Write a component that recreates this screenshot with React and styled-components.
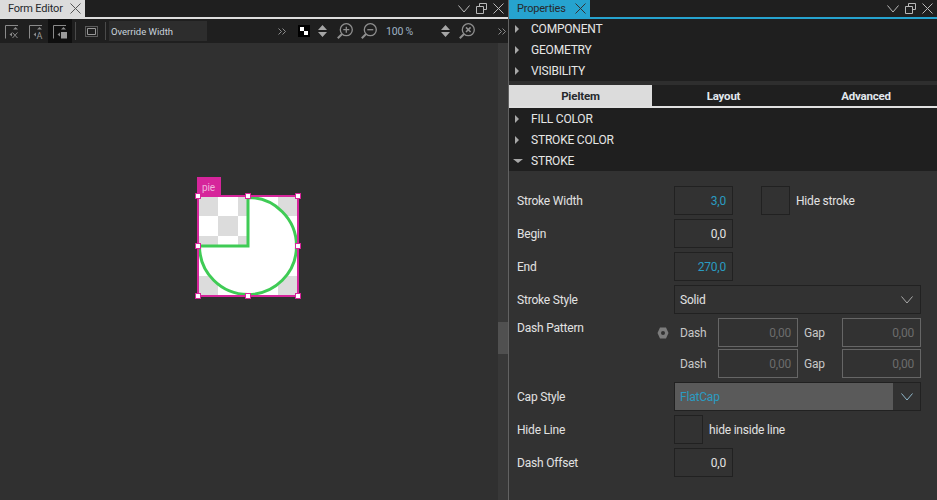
import styled, { createGlobalStyle } from "styled-components";

const Global = createGlobalStyle`
  html, body { margin: 0; padding: 0; background: #303030; }
  body { font-family: Roboto, "Noto Sans", sans-serif; font-size: 12px; letter-spacing: -0.2px; color: #e2e2e2; white-space: nowrap; }
`;

const Page = styled.div`
  width: 937px;
  height: 500px;
  display: flex;
  overflow: hidden;
`;

const LeftPane = styled.section`
  width: 508px;
  display: flex;
  flex-direction: column;
  border-right: 1px solid #626262;
`;

const RightPane = styled.section`
  flex: 1;
  display: flex;
  flex-direction: column;
  background: #323232;
`;

const TitleBar = styled.header`
  height: 17px;
  flex: none;
  display: flex;
  justify-content: space-between;
  background: #1f1f1f;
  border-bottom: 2px solid ${(p) => p.$line};
`;

const Tab = styled.div`
  width: ${(p) => p.$width}px;
  display: flex;
  align-items: center;
  justify-content: space-between;
  box-sizing: border-box;
  padding: 0 4px 0 8px;
  background: ${(p) => p.$bg};
  color: #26292c;
  font-size: 11px;
`;

const WindowButtons = styled.div`
  display: flex;
  align-items: center;
  gap: 6px;
  padding-right: 4px;
`;

const Toolbar = styled.div`
  height: 24px;
  flex: none;
  display: flex;
  align-items: center;
  background: #1f1f1f;
`;

const ToolButton = styled.div`
  width: ${(p) => p.$width || 24}px;
  height: 24px;
  margin-left: ${(p) => p.$left || 0}px;
  flex: none;
  display: flex;
  align-items: center;
  justify-content: center;
  background: ${(p) => (p.$active ? "#0f0f0f" : "transparent")};
`;

const ToolSep = styled.div`
  width: 1px;
  height: 18px;
  margin-left: ${(p) => p.$left}px;
  flex: none;
  background: #4a4a4a;
`;

const ToolInput = styled.div`
  width: 98px;
  height: 20px;
  margin-left: 3px;
  flex: none;
  display: flex;
  align-items: center;
  padding-left: 2px;
  box-sizing: border-box;
  background: #2d2d2d;
  color: #c9d3dc;
  font-size: 9.5px;
  letter-spacing: 0;
`;

const ZoomText = styled.div`
  width: 28px;
  margin-left: 5px;
  flex: none;
  color: #9fb2c4;
  font-size: 10.5px;
`;

const Workspace = styled.div`
  flex: 1;
  display: flex;
`;

const Canvas = styled.div`
  flex: 1;
  position: relative;
  background: #303030;
`;

const Track = styled.div`
  width: 10px;
  background: #383838;
  padding-top: 279px;
  box-sizing: border-box;
`;

const Thumb = styled.div`
  height: 32px;
  background: #505050;
`;

const PieTag = styled.div`
  position: absolute;
  left: 197px;
  top: 134px;
  width: 24px;
  height: 19px;
  box-sizing: border-box;
  padding-left: 5px;
  background: #d6259b;
  color: #f0b4dc;
  font-size: 10px;
  line-height: 21px;
`;

const PieBox = styled.svg`
  position: absolute;
  left: 194px;
  top: 150px;
`;

const SectionList = styled.div`
  flex: none;
  display: flex;
  flex-direction: column;
  gap: 1px;
  padding-top: ${(p) => p.$top || 0}px;
  background: #1f1f1f;
`;

const SectionRow = styled.div`
  height: 20px;
  display: flex;
  align-items: center;
  padding-left: 6px;
  font-size: 12px;
  color: #e6e6e6;
`;

const Arrow = styled.div`
  width: 0;
  height: 0;
  ${(p) =>
    p.$open
      ? `border-left: 5px solid transparent; border-right: 5px solid transparent; border-top: 4px solid #a8a8a8; margin-left: -2px; margin-right: 8px;`
      : `border-top: 4px solid transparent; border-bottom: 4px solid transparent; border-left: 4px solid #a8a8a8; margin-right: 12px;`}
`;

const SectionGap = styled.div`
  height: 4px;
  flex: none;
  background: #2e2e2e;
`;

const TabStrip = styled.div`
  height: 21px;
  flex: none;
  display: grid;
  grid-template-columns: 143px 143px 1fr;
  background: #1f1f1f;
  border-bottom: 2px solid #e0e0e0;
`;

const PropTab = styled.div`
  display: flex;
  align-items: center;
  justify-content: center;
  font-size: 11.5px;
  font-weight: 700;
  background: ${(p) => (p.$active ? "#dcdcdc" : "transparent")};
  color: ${(p) => (p.$active ? "#26292c" : "#e2e8ee")};
`;

const Form = styled.div`
  flex: 1;
  display: flex;
  flex-direction: column;
  gap: 4px;
  padding: 15px 16px 0 8px;
`;

const FormRow = styled.div`
  display: flex;
  align-items: ${(p) => (p.$top ? "flex-start" : "center")};
  min-height: 29px;
`;

const Label = styled.div`
  width: ${(p) => p.$width || 157}px;
  flex: none;
  padding-top: ${(p) => (p.$top ? 3 : 1)}px;
  font-size: 12px;
  color: #e2e2e2;
`;

const NumberBox = styled.div`
  width: 59px;
  height: 29px;
  box-sizing: border-box;
  display: flex;
  align-items: center;
  justify-content: flex-end;
  padding: 1px 6px 0 0;
  border: 1px solid #212121;
  font-size: 12px;
  color: ${(p) => (p.$accent ? "#2a9cc2" : "#e2e2e2")};
`;

const CheckBox = styled.div`
  width: 29px;
  height: 29px;
  margin-left: ${(p) => p.$left || 0}px;
  box-sizing: border-box;
  border: 1px solid #212121;
  flex: none;
`;

const CheckLabel = styled.div`
  margin-left: 6px;
  padding-top: 1px;
  font-size: 12px;
  color: #e2e2e2;
`;

const Select = styled.div`
  width: 247px;
  height: 29px;
  box-sizing: border-box;
  display: flex;
  border: 1px solid #212121;
  font-size: 12px;
`;

const SelectValue = styled.div`
  flex: 1;
  display: flex;
  align-items: center;
  padding: 1px 0 0 5px;
  background: ${(p) => (p.$filled ? "#5a5a5a" : "transparent")};
  color: ${(p) => (p.$filled ? "#2a9cc2" : "#e2e2e2")};
`;

const SelectArrow = styled.div`
  width: 27px;
  display: flex;
  align-items: center;
  justify-content: center;
`;

const ResetDot = styled.svg`
  flex: none;
  margin: 9px 11px 0 0;
`;

const DashGrid = styled.div`
  display: grid;
  grid-template-columns: 38px 80px 44px 79px;
  grid-auto-rows: 29px;
  row-gap: 2px;
  align-items: center;
`;

const DashLabel = styled.div`
  font-size: 12px;
  color: #c8c8c8;
  padding: 1px 0 0 ${(p) => p.$pad || 0}px;
`;

const DashInput = styled.div`
  height: 29px;
  box-sizing: border-box;
  display: flex;
  align-items: center;
  justify-content: flex-end;
  padding: 1px 6px 0 0;
  border: 1px solid #666;
  font-size: 12px;
  color: #6c6c6c;
`;

const Stroke = styled.svg`
  display: block;
  flex: none;
  fill: none;
  stroke: ${(p) => p.$color || "#b8b8b8"};
  stroke-width: ${(p) => p.$weight || 1};
`;

const Chevron = ({ color = "#b8b8b8" }) => (
  <Stroke $color={color} width="12" height="8" viewBox="0 0 12 8">
    <path d="M.5.5 6 7 11.5.5" />
  </Stroke>
);

const CloseX = ({ color = "#b8b8b8" }) => (
  <Stroke $color={color} width="11" height="11" viewBox="0 0 11 11">
    <path d="M.5.5l10 10M10.5.5l-10 10" />
  </Stroke>
);

const Restore = () => (
  <Stroke width="11" height="11" viewBox="0 0 11 11">
    <path d="M3.5 3.5V.5h7v6h-3M.5 3.5h7v7h-7z" />
  </Stroke>
);

const Double = () => (
  <Stroke $color="#8c8c8c" width="8" height="7" viewBox="0 0 8 7">
    <path d="M.5.5l3 3-3 3M4.5.5l3 3-3 3" />
  </Stroke>
);

const AnchorIcon = ({ children }) => (
  <Stroke $color="#8a8a8a" width="14" height="15" viewBox="0 0 14 15">
    <path d="M.5 14.500V1.500H13" />
    <path d="M10.500 3l2.500 2.500H8zM4.500 10.500 7 8.500v4z" fill="#8a8a8a" stroke="none" />
    {children}
  </Stroke>
);

const MarginIcon = () => (
  <Stroke $color="#999" width="13" height="11" viewBox="0 0 13 11">
    <path d="M.5.5h12v10H.5z" strokeDasharray="1 1" />
    <path d="M2.500 2.500h8v6h-8z" />
  </Stroke>
);

const Spinner = () => (
  <svg width="9" height="12" viewBox="0 0 9 12" style={{ display: "block" }}>
    <path d="M4.500 0 9 5H0zM0 7h9l-4.500 5z" fill="#a6a6a6" />
  </svg>
);

const ZoomIcon = ({ children }) => (
  <Stroke $color="#8f8f8f" $weight={1.3} width="16" height="16" viewBox="0 0 16 16">
    <circle cx="9.300" cy="6.700" r="6" />
    <path d="M5 11 .8 15.200" strokeWidth="2" />
    {children}
  </Stroke>
);

const Checker = () => (
  <svg width="12" height="12" viewBox="0 0 12 12" style={{ display: "block" }}>
    <rect width="12" height="12" fill="#000" />
    <path d="M2 2h4v4H2zM6 6h4v4H6z" fill="#fff" />
  </svg>
);

// x, y of the eight grab handles around the selected pie
const handles = [
  [4, 3], [54, 3], [104, 3],
  [4, 53], [104, 53],
  [4, 103], [54, 103], [104, 103],
];

const cells = [];
for (let r = 0; r < 5; r++) {
  for (let c = 0; c < 5; c++) {
    if ((r + c) % 2 === 0) cells.push([c, r]);
  }
}

const PieItem = () => (
  <PieBox width="108" height="108" viewBox="0 0 108 108">
    <rect x="4" y="3" width="100" height="100" fill="#fff" />
    {cells.map(([c, r]) => (
      <rect key={`${c}-${r}`} x={4 + c * 20} y={3 + r * 20} width="20" height="20" fill="#dcdcdc" />
    ))}
    <path
      d="M54 53V4.500A48.500 48.500 0 1 1 5.500 53Z"
      fill="#fff"
      stroke="#3fcb55"
      strokeWidth="3"
    />
    <rect x="4" y="3" width="100" height="100" fill="none" stroke="#d6259b" strokeWidth="2" />
    {handles.map(([x, y]) => (
      <rect key={`${x}-${y}`} x={x - 2.5} y={y - 2.5} width="5" height="5" fill="#fff" stroke="#d6259b" />
    ))}
  </PieBox>
);

const topSections = ["COMPONENT", "GEOMETRY", "VISIBILITY"];

const App = () => (
  <Page>
    <Global />
    <LeftPane>
      <TitleBar $line="#dedede">
        <Tab $width={85} $bg="#dcdcdc">
          Form Editor
          <CloseX color="#555" />
        </Tab>
        <WindowButtons>
          <Chevron />
          <Restore />
          <CloseX />
        </WindowButtons>
      </TitleBar>
      <Toolbar>
        <ToolButton>
          <AnchorIcon><path d="M7.500 8.500l5 5.500M12.500 8.500l-5 5.500" /></AnchorIcon>
        </ToolButton>
        <ToolButton>
          <AnchorIcon>
            <text x="7.500" y="14.500" fontSize="9" fontFamily="Roboto, sans-serif" fill="#9a9a9a" stroke="none">A</text>
          </AnchorIcon>
        </ToolButton>
        <ToolButton $active>
          <AnchorIcon><rect x="8" y="8" width="6" height="6.500" fill="#9a9a9a" stroke="none" /></AnchorIcon>
        </ToolButton>
        <ToolSep $left={3} />
        <ToolButton $left={3}><MarginIcon /></ToolButton>
        <ToolSep $left={2} />
        <ToolInput>Override Width</ToolInput>
        <ToolButton $left={69} $width={12}><Double /></ToolButton>
        <ToolButton $left={10} $width={12}><Checker /></ToolButton>
        <ToolButton $left={8} $width={9}><Spinner /></ToolButton>
        <ToolButton $left={6}>
          <ZoomIcon><path d="M6.300 6.700h6M9.300 3.700v6" /></ZoomIcon>
        </ToolButton>
        <ToolButton>
          <ZoomIcon><path d="M6.300 6.700h6" /></ZoomIcon>
        </ToolButton>
        <ZoomText>100 %</ZoomText>
        <ToolButton $left={27} $width={9}><Spinner /></ToolButton>
        <ToolButton $left={5}>
          <ZoomIcon><path d="M7 4.400l4.600 4.600M11.600 4.400 7 9" strokeWidth="1.600" /></ZoomIcon>
        </ToolButton>
        <ToolButton $left={17} $width={12}><Double /></ToolButton>
      </Toolbar>
      <Workspace>
        <Canvas>
          <PieTag>pie</PieTag>
          <PieItem />
        </Canvas>
        <Track><Thumb /></Track>
      </Workspace>
    </LeftPane>
    <RightPane>
      <TitleBar $line="#26a3cf">
        <Tab $width={81} $bg="#26a3cf">
          Properties
          <CloseX color="#333" />
        </Tab>
        <WindowButtons>
          <Chevron />
          <Restore />
          <CloseX />
        </WindowButtons>
      </TitleBar>
      <SectionList>
        {topSections.map((name) => (
          <SectionRow key={name}><Arrow />{name}</SectionRow>
        ))}
      </SectionList>
      <SectionGap />
      <TabStrip>
        <PropTab $active>PieItem</PropTab>
        <PropTab>Layout</PropTab>
        <PropTab>Advanced</PropTab>
      </TabStrip>
      <SectionList $top={1}>
        <SectionRow><Arrow />FILL COLOR</SectionRow>
        <SectionRow><Arrow />STROKE COLOR</SectionRow>
        <SectionRow><Arrow $open />STROKE</SectionRow>
      </SectionList>
      <Form>
        <FormRow>
          <Label>Stroke Width</Label>
          <NumberBox $accent>3,0</NumberBox>
          <CheckBox $left={28} />
          <CheckLabel>Hide stroke</CheckLabel>
        </FormRow>
        <FormRow>
          <Label>Begin</Label>
          <NumberBox>0,0</NumberBox>
        </FormRow>
        <FormRow>
          <Label>End</Label>
          <NumberBox $accent>270,0</NumberBox>
        </FormRow>
        <FormRow>
          <Label>Stroke Style</Label>
          <Select>
            <SelectValue>Solid</SelectValue>
            <SelectArrow><Chevron color="#aaa" /></SelectArrow>
          </Select>
        </FormRow>
        <FormRow $top>
          <Label $width={140} $top>Dash Pattern</Label>
          <ResetDot width="12" height="12" viewBox="0 0 12 12">
            <path d="M3 .5h6L11.500 6 9 11.500H3L.5 6zM6 4a2 2 0 1 0 0 4 2 2 0 0 0 0-4z" fill="#7c7c7c" fillRule="evenodd" />
          </ResetDot>
          <DashGrid>
            <DashLabel>Dash</DashLabel>
            <DashInput>0,00</DashInput>
            <DashLabel $pad={6}>Gap</DashLabel>
            <DashInput>0,00</DashInput>
            <DashLabel>Dash</DashLabel>
            <DashInput>0,00</DashInput>
            <DashLabel $pad={6}>Gap</DashLabel>
            <DashInput>0,00</DashInput>
          </DashGrid>
        </FormRow>
        <FormRow>
          <Label>Cap Style</Label>
          <Select>
            <SelectValue $filled>FlatCap</SelectValue>
            <SelectArrow><Chevron color="#8fb6c9" /></SelectArrow>
          </Select>
        </FormRow>
        <FormRow>
          <Label>Hide Line</Label>
          <CheckBox />
          <CheckLabel>hide inside line</CheckLabel>
        </FormRow>
        <FormRow>
          <Label>Dash Offset</Label>
          <NumberBox>0,0</NumberBox>
        </FormRow>
      </Form>
    </RightPane>
  </Page>
);

export default App;
